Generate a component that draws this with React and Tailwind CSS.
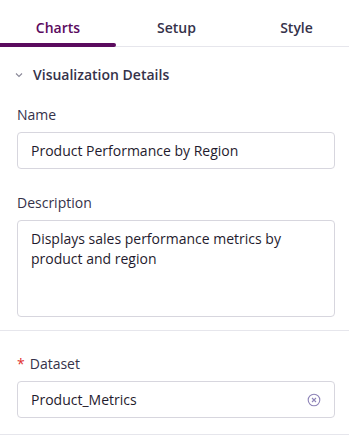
import React from "react";

export default function App() {
  const font = { fontFamily: '"Open Sans", "Noto Sans", sans-serif' };
  return (
    <div className="w-[349px] h-[436px] bg-white overflow-hidden" style={font}>
      {/* Tabs */}
      <div className="relative flex h-[47px] border-b border-[#e6e6ec]">
        <div className="w-[116px] flex items-center justify-center text-[14px] font-semibold text-[#5b0b5e] pt-[13px] pb-[4px] relative">
          Charts
          <div className="absolute left-0 right-0 bottom-[-1px] h-[4px] bg-[#5b0b5e] rounded-r-[3px]" />
        </div>
        <div className="w-[121px] flex items-center justify-center text-[14px] font-semibold text-[#35324a] pt-[13px] pb-[4px]">
          Setup
        </div>
        <div className="flex-1 flex items-center justify-center text-[14px] font-semibold text-[#35324a] pt-[13px] pb-[4px] pl-[7px]">
          Style
        </div>
      </div>

      {/* Section header */}
      <div className="flex items-center h-[54px] pl-[14px] pt-[1px]">
        <svg width="10" height="10" viewBox="0 0 10 10" className="mr-[9px]">
          <path d="M2 3.5 L5 6.5 L8 3.5" fill="none" stroke="#8a8898" strokeWidth="1.1" />
        </svg>
        <span className="text-[14px] font-semibold text-[#35324a]">Visualization Details</span>
      </div>

      <div className="pl-[17px] pr-[14px]">
        <div className="text-[14px] text-[#35324a] mt-[4px] leading-[20px]">Name</div>
        <div className="mt-[7px] h-[37px] border border-[#d7d6de] rounded-[4px] flex items-center px-[13px] text-[14px] text-[#1f1b2e]">
          Product Performance by Region
        </div>

        <div className="text-[14px] text-[#35324a] mt-[24px] leading-[20px]">Description</div>
        <div className="mt-[7px] h-[97px] border border-[#d7d6de] rounded-[4px] px-[13px] pt-[8px] text-[14px] leading-[20px] text-[#1f1b2e]">
          Displays sales performance metrics by product and region
        </div>
      </div>

      <div className="mt-[13px] border-t border-[#e6e6ec]" />

      <div className="pl-[17px] pr-[14px]">
        <div className="mt-[23px] text-[14px] leading-[20px] text-[#35324a] flex">
          <span className="text-[#e0312e] mr-[5px]">*</span>
          Dataset
        </div>
        <div className="mt-[7px] h-[37px] border border-[#d7d6de] rounded-[4px] flex items-center justify-between pl-[13px] pr-[13px] text-[14px] text-[#1f1b2e]">
          <span>Product_Metrics</span>
          <svg width="14" height="14" viewBox="0 0 14 14">
            <circle cx="7" cy="7" r="5.8" fill="none" stroke="#8e84b8" strokeWidth="1.1" />
            <path d="M5 5 L9 9 M9 5 L5 9" stroke="#8e84b8" strokeWidth="1.1" />
          </svg>
        </div>
      </div>

      <div className="mt-[16px] border-t border-[#e6e6ec]" />
    </div>
  );
}
